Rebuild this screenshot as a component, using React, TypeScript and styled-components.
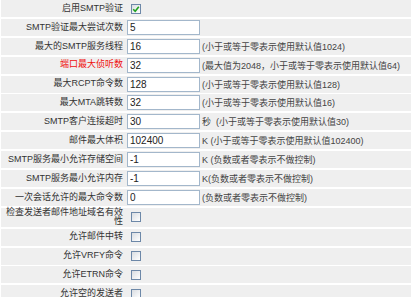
import styled, { createGlobalStyle } from "styled-components";

const GlobalStyle = createGlobalStyle`
  html, body {
    margin: 0;
    padding: 0;
    background: #fff;
  }
  body {
    font-family: "Liberation Sans", "Noto Sans CJK SC", sans-serif;
  }
`

const Settings__Table = styled.div`
  box-sizing: border-box;
  display: flex;
  flex-direction: column;
  gap: 1.9px;
  padding: 0 1px;
  width: 412px;
`

const Settings__Row = styled.div`
  align-items: center;
  background-color: #efefef;
  display: flex;
  min-height: 17px;
`

const Settings__Label = styled.div<{ $alert?: boolean }>`
  box-sizing: border-box;
  color: ${p => (p.$alert ? "#f01010" : "#333")};
  flex-shrink: 0;
  font-size: 9px;
  line-height: 9.5px;
  padding: 0 2px 0 4px;
  text-align: right;
  width: 124px;
`

const Settings__Value = styled.div`
  align-items: center;
  display: flex;
  flex: 1;
  padding-left: 2px;
`

const Settings__Input = styled.input`
  background: #fff;
  border: 1px solid #a3b7cb;
  box-sizing: border-box;
  color: #222;
  font-family: "Liberation Sans", sans-serif;
  font-size: 10px;
  height: 15px;
  margin: 0;
  outline: none;
  padding: 0 2px;
  width: 73px;
`

const Settings__Check = styled.span`
  align-items: center;
  background: linear-gradient(135deg, #d9dde2, #fff);
  border: 1px solid #6d88a8;
  box-sizing: border-box;
  display: inline-flex;
  height: 10px;
  justify-content: center;
  margin-left: 4px;
  width: 10px;
`

const Settings__Hint = styled.span`
  color: #444;
  font-size: 9px;
  margin-left: 2px;
  white-space: pre;
`

type Field = {
  label: string
  value?: string
  hint?: string
  checked?: boolean
  alert?: boolean
}

const fields: Field[] = [
  { label: "启用SMTP验证", checked: true },
  { label: "SMTP验证最大尝试次数", value: "5" },
  { label: "最大的SMTP服务线程", value: "16", hint: "(小于或等于零表示使用默认值1024)" },
  { label: "端口最大侦听数", value: "32", hint: "(最大值为2048，小于或等于零表示使用默认值64)", alert: true },
  { label: "最大RCPT命令数", value: "128", hint: "(小于或等于零表示使用默认值128)" },
  { label: "最大MTA跳转数", value: "32", hint: "(小于或等于零表示使用默认值16)" },
  { label: "SMTP客户连接超时", value: "30", hint: "秒  (小于或等于零表示使用默认值30)" },
  { label: "邮件最大体积", value: "102400", hint: "K (小于或等于零表示使用默认值102400)" },
  { label: "SMTP服务最小允许存储空间", value: "-1", hint: "K (负数或者零表示不做控制)" },
  { label: "SMTP服务最小允许内存", value: "-1", hint: "K(负数或者零表示不做控制)" },
  { label: "一次会话允许的最大命令数", value: "0", hint: "(负数或者零表示不做控制)" },
  { label: "检查发送者邮件地址域名有效性", checked: false },
  { label: "允许邮件中转", checked: false },
  { label: "允许VRFY命令", checked: false },
  { label: "允许ETRN命令", checked: false },
  { label: "允许空的发送者", checked: false },
]

const CheckMark = () => (
  <svg width="8" height="8" viewBox="0 0 8 8">
    <path d="M1.2 4.2 L3.2 6.2 L6.8 1.8" fill="none" stroke="#1fa21f" strokeWidth="1.6" />
  </svg>
)

const App = () => {
  return (
    <>
      <GlobalStyle />
      <Settings__Table>
        {fields.map(f => (
          <Settings__Row key={f.label}>
            <Settings__Label $alert={f.alert}>{f.label}</Settings__Label>
            <Settings__Value>
              {f.value !== undefined ? (
                <Settings__Input type="text" defaultValue={f.value} readOnly />
              ) : (
                <Settings__Check>{f.checked && <CheckMark />}</Settings__Check>
              )}
              {f.hint && <Settings__Hint>{f.hint}</Settings__Hint>}
            </Settings__Value>
          </Settings__Row>
        ))}
      </Settings__Table>
    </>
  )
}

export default App
